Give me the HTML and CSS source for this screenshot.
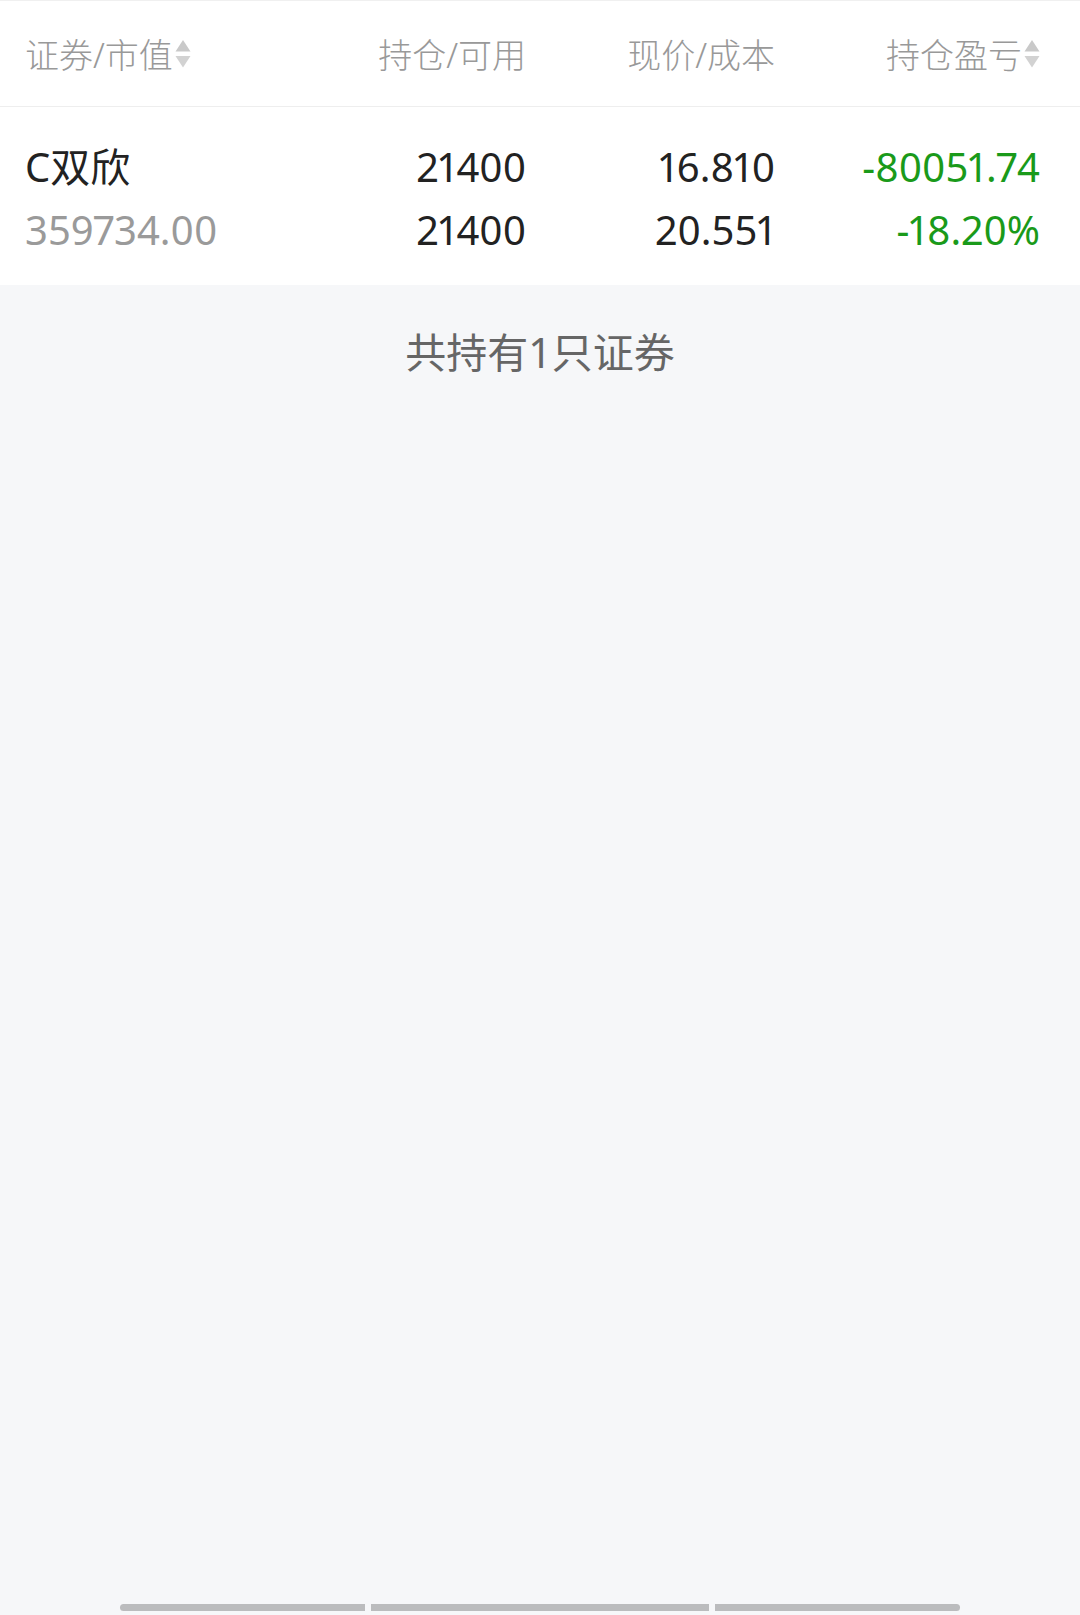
FILE: index.html
```html
<!DOCTYPE html>
<html lang="zh-CN">
<head>
    <meta charset="UTF-8">
    <title>持仓</title>
    <link rel="stylesheet" href="styles.css">
</head>
<body>
<div class="page">
    <div class="thead">
        <div class="th th-first">证券/市值<svg class="sort" viewBox="0 0 16 30" width="16" height="30"><polygon points="8,1 15.5,12.5 0.5,12.5" fill="#c9c9c9"/><polygon points="0.5,17 15.5,17 8,28.5" fill="#d2d2d2"/></svg></div>
        <div class="th">持仓/可用</div>
        <div class="th">现价/成本</div>
        <div class="th">持仓盈亏<svg class="sort" viewBox="0 0 16 30" width="16" height="30"><polygon points="8,1 15.5,12.5 0.5,12.5" fill="#c9c9c9"/><polygon points="0.5,17 15.5,17 8,28.5" fill="#d2d2d2"/></svg></div>
    </div>

    <div class="row">
        <div class="cell cell-first">
            <div class="line">C双欣</div>
            <div class="line muted">359734.00</div>
        </div>
        <div class="cell">
            <div class="line">21400</div>
            <div class="line">21400</div>
        </div>
        <div class="cell">
            <div class="line">16.810</div>
            <div class="line">20.551</div>
        </div>
        <div class="cell down">
            <div class="line">-80051.74</div>
            <div class="line">-18.20%</div>
        </div>
    </div>

    <div class="summary">共持有1只证券</div>

    <div class="scrollbar">
        <span class="seg seg-left"></span>
        <span class="seg seg-mid"></span>
        <span class="seg seg-right"></span>
    </div>
</div>
</body>
</html>
```

FILE: styles.css
```css
html, body{
margin:0;
padding:0;
}

body{
background-color:#f6f7f9;
font-family:"Noto Sans", "Noto Sans CJK SC", sans-serif;
}

.page{
min-height:1615px;
display:flex;
flex-direction:column;
}

.thead, .row{
display:grid;
grid-template-columns:1fr 250px 249px 265px;
padding:0 40px 0 25px;
background-color:#ffffff;
}

.thead{
align-items:center;
border-top:1px solid #f0f0f0;
border-bottom:1px solid #eeeeee;
box-sizing:border-box;
height:107px;
}

.th{
font-size:34px;
font-weight:300;
color:#999999;
display:flex;
align-items:center;
justify-content:flex-end;
}

.th-first{
justify-content:flex-start;
}

.sort{
margin-left:2px;
}

.row{
padding-top:28px;
padding-bottom:24px;
}

.cell{
text-align:right;
color:#222222;
font-size:40px;
font-variant-numeric:proportional-nums;
}

.cell-first{
text-align:left;
}

.line{
line-height:63px;
white-space:nowrap;
}

.muted{
color:#9a9a9a;
}

.down{
color:#1a9a1a;
}

.summary{
text-align:center;
font-size:41px;
line-height:56px;
color:#666666;
padding-top:39px;
}

.scrollbar{
margin-top:auto;
margin-bottom:4px;
display:flex;
justify-content:center;
gap:6px;
}

.seg{
height:7px;
background-color:#bbbcbe;
}

.seg-left{
width:245px;
border-radius:4px 0 0 4px;
}

.seg-mid{
width:338px;
}

.seg-right{
width:245px;
border-radius:0 4px 4px 0;
}
```
